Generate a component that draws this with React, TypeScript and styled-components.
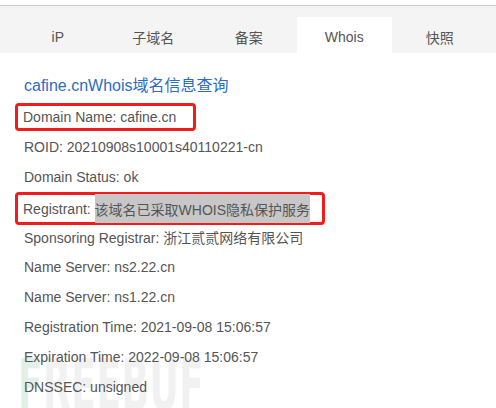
import React from "react";
import styled, { createGlobalStyle } from "styled-components";

const Global = createGlobalStyle`
  html, body { margin: 0; padding: 0; background: #fff; overflow: hidden; }
  body { font-family: "Liberation Sans", Arial, "Noto Sans CJK SC", sans-serif; }
`;

const Page = styled.div`
  position: relative;
  width: 496px;
  height: 408px;
  padding-top: 5px;
  box-sizing: border-box;
  overflow: hidden;
`;

const TabBar = styled.div`
  display: flex;
  align-items: flex-end;
  height: 47px;
  padding-left: 10px;
  background: #f4f4f4;
  border-top: 1px solid #cccccc;
`;

const Tab = styled.div<{ $active?: boolean }>`
  width: 95.5px;
  height: 36px;
  display: flex;
  align-items: center;
  justify-content: center;
  padding-top: 4px;
  box-sizing: border-box;
  font-size: 14px;
  color: #555;
  background: ${(p) => (p.$active ? "#ffffff" : "transparent")};
`;

const Content = styled.div`
  padding: 18px 0 0 24px;
  position: relative;
  z-index: 1;
`;

const Title = styled.div`
  height: 31px;
  line-height: 30px;
  font-size: 16px;
  color: #2b6dc2;
`;

const Row = styled.div`
  height: 30px;
  display: flex;
  align-items: center;
  font-size: 14px;
  color: #555;
  white-space: nowrap;
`;

const Boxed = styled.div<{ $h: number; $pr: number; $shift: number }>`
  display: flex;
  align-items: stretch;
  height: ${(p) => p.$h}px;
  margin-left: -9px;
  margin-top: ${(p) => p.$shift}px;
  padding: 0 ${(p) => p.$pr}px 0 5px;
  box-sizing: border-box;
  border: 3px solid #f21c1c;
  border-radius: 4px;
`;

const Label = styled.span`
  display: flex;
  align-items: center;
`;

const Mark = styled.span`
  display: flex;
  align-items: center;
  background: #c7c7c7;
  margin: -1px 0;
`;

const Watermark = styled.div`
  position: absolute;
  left: 18px;
  top: 349px;
  font-family: "DejaVu Sans", sans-serif;
  font-weight: 900;
  font-size: 72px;
  line-height: 1;
  color: #f1f1f1;
  letter-spacing: 1px;
  transform: scaleX(0.5);
  transform-origin: left top;
  white-space: nowrap;
  pointer-events: none;
  z-index: 0;
`;

const GreenF = styled.span`
  color: #e2f0e7;
`;

const tabs = ["iP", "子域名", "备案", "Whois", "快照"];

const rows = [
  "ROID: 20210908s10001s40110221-cn",
  "Domain Status: ok",
];

const rows2 = [
  "Sponsoring Registrar: 浙江贰贰网络有限公司",
  "Name Server: ns2.22.cn",
  "Name Server: ns1.22.cn",
  "Registration Time: 2021-09-08 15:06:57",
  "Expiration Time: 2022-09-08 15:06:57",
  "DNSSEC: unsigned",
];

export default function App() {
  return (
    <Page>
      <Global />
      <TabBar>
        {tabs.map((t) => (
          <Tab key={t} $active={t === "Whois"}>
            {t}
          </Tab>
        ))}
      </TabBar>
      <Watermark aria-hidden="true">
        <GreenF>F</GreenF>REEBUF
      </Watermark>
      <Content>
        <Title>cafine.cnWhois域名信息查询</Title>
        <Row>
          <Boxed $h={28} $pr={17} $shift={0}>
            <Label>Domain Name: cafine.cn</Label>
          </Boxed>
        </Row>
        {rows.map((r) => (
          <Row key={r}>{r}</Row>
        ))}
        <Row>
          <Boxed $h={33} $pr={12} $shift={3}>
            <Label>Registrant:&nbsp;</Label>
            <Mark>该域名已采取WHOIS隐私保护服务</Mark>
          </Boxed>
        </Row>
        {rows2.map((r, i) => (
          <Row key={i}>{r}</Row>
        ))}
      </Content>
    </Page>
  );
}
